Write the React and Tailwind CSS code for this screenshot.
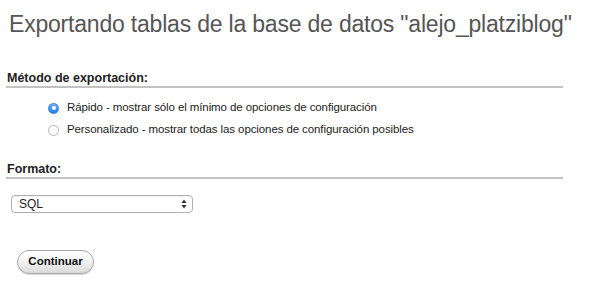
const font = { fontFamily: '"Liberation Sans", Arial, Helvetica, sans-serif' };

const Radio = ({ checked, label }) => (
  <label className="flex items-center h-[22px]">
    {checked ? (
      <span className="w-[11px] h-[11px] rounded-full bg-gradient-to-b from-[#6cb3fa] to-[#1a7cf0] border border-[#2f7fd8] flex items-center justify-center">
        <span className="w-[4px] h-[4px] rounded-full bg-white" />
      </span>
    ) : (
      <span className="w-[11px] h-[11px] rounded-full bg-white border border-[#b4b4b4]" />
    )}
    <span className="ml-[8px] text-[11.5px] tracking-[-0.1px] text-[#222]">{label}</span>
  </label>
);

export default function App() {
  return (
    <div className="w-[614px] h-[292px] bg-white text-[#222]" style={font}>
      <h2 className="pl-[9px] pt-[10px] text-[23px] tracking-[-0.2px] leading-[28px] text-[#555]">
        Exportando tablas de la base de datos "alejo_platziblog"
      </h2>

      <div className="ml-[6px] w-[557px] mt-[33px] border-b-2 border-[#c2c2c2]">
        <h3 className="pl-[1px] text-[12.5px] leading-[15px] font-bold text-[#222]">
          Método de exportación:
        </h3>
      </div>

      <div className="pl-[48px] pt-[9px]">
        <Radio checked label="Rápido - mostrar sólo el mínimo de opciones de configuración" />
        <Radio label="Personalizado - mostrar todas las opciones de configuración posibles" />
      </div>

      <div className="ml-[6px] w-[557px] mt-[21px] border-b-2 border-[#c2c2c2]">
        <h3 className="pl-[1px] text-[12.5px] leading-[15px] font-bold text-[#222]">
          Formato:
        </h3>
      </div>

      <div className="pl-[11px] pt-[16px]">
        <div className="relative w-[182px] h-[18px] rounded-[4px] border border-[#b0b0b0] bg-white shadow-[inset_0_1px_1px_rgba(0,0,0,0.06)] flex items-center">
          <span className="pl-[7px] text-[12px] text-[#222]">SQL</span>
          <svg className="absolute right-[5px] top-[3px]" width="6" height="10" viewBox="0 0 6 10">
            <path d="M3 0.5 L5.6 4 H0.4 Z" fill="#333" />
            <path d="M3 9.5 L5.6 6 H0.4 Z" fill="#333" />
          </svg>
        </div>
      </div>

      <div className="pl-[17px] pt-[35px]">
        <button className="w-[77px] h-[24px] rounded-full border border-[#a6a6a6] bg-gradient-to-b from-[#ffffff] via-[#f2f2f2] to-[#dadada] shadow-[0_1px_1px_rgba(0,0,0,0.15)] text-[11.5px] font-bold text-[#111]">
          Continuar
        </button>
      </div>
    </div>
  );
}
